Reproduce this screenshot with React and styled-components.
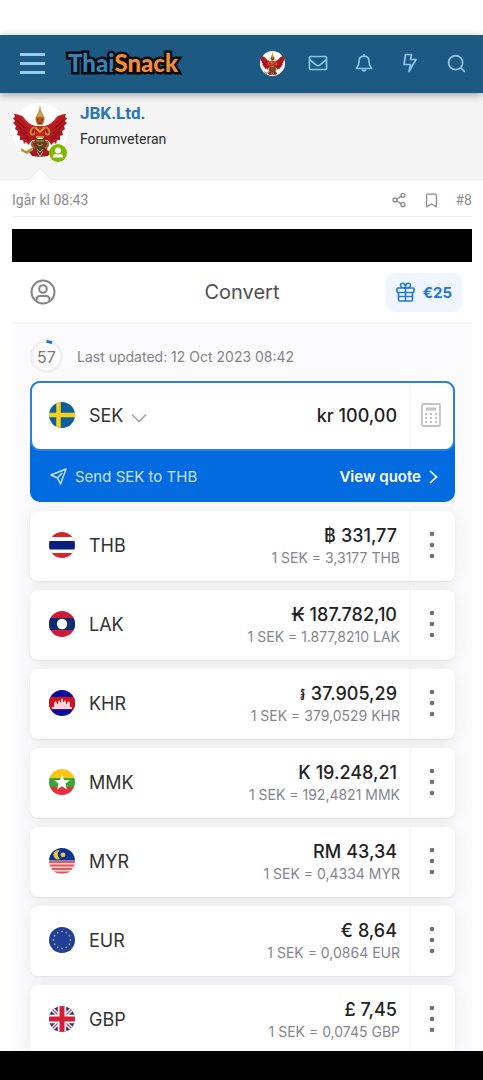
import { useState } from "react";
import styled, { createGlobalStyle } from "styled-components";
import { Bookmark, Search, Share2 } from "lucide-react";

const GlobalStyle = createGlobalStyle`
  * {
    box-sizing: border-box;
  }
  body {
    margin: 0;
    background: #fff;
    font-family: Roboto, "Liberation Sans", sans-serif;
  }
  button, input, select {
    margin: 0;
    padding: 0;
    border: none;
    background: none;
    font: inherit;
    color: inherit;
  }
  button {
    cursor: pointer;
  }
  svg {
    display: block;
  }
`;

const Page = styled.div`
  display: flex;
  flex-direction: column;
  height: 100vh;
`;

const StatusBar = styled.div`
  flex: none;
  height: 35px;
`;

const SystemBar = styled.div`
  flex: none;
  height: 29px;
  background: #000;
`;

const Header = styled.header`
  position: relative;
  z-index: 1;
  flex: none;
  display: flex;
  align-items: center;
  height: 58px;
  padding: 0 4px 2px 20px;
  background: #1c5a84;
  color: #8fc3ef;
  box-shadow: 0 2px 8px rgba(0, 0, 0, 0.35);
`;

const MenuButton = styled.button`
  display: flex;
  flex-direction: column;
  gap: 6px;
  width: 25px;
  margin-right: 23px;
`;

const MenuLine = styled.span`
  height: 3px;
  background: #9dccf2;
`;

const Logo = styled.a`
  flex: 1;
  font-family: Lato, sans-serif;
  font-size: 24px;
  font-weight: 900;
  line-height: 28px;
  text-decoration: none;
  -webkit-text-stroke: 5px #0a0c10;
  paint-order: stroke fill;
`;

const LogoPart = styled.span`
  color: ${(props) => (props.$accent ? "#f58d32" : "#3584b8")};
`;

const NavButton = styled.button`
  display: flex;
  align-items: center;
  justify-content: center;
  width: 46px;
  height: 56px;
`;

const Main = styled.main`
  flex: 1;
  min-height: 0;
  overflow: hidden;
`;

const UserPanel = styled.section`
  position: relative;
  display: flex;
  gap: 12px;
  height: 87px;
  padding: 10px 12px;
  background: #f5f5f5;
  border-bottom: 1px solid #ececec;
  &::after {
    content: "";
    position: absolute;
    left: 29px;
    bottom: -1px;
    border: 11px solid transparent;
    border-top: none;
    border-bottom-color: #fff;
    filter: drop-shadow(0 -1px 0 #e2e2e2);
  }
`;

const AvatarBox = styled.div`
  position: relative;
  width: 56px;
  height: 56px;
`;

const OnlineBadge = styled.span`
  position: absolute;
  right: 1px;
  bottom: -3px;
`;

const UserName = styled.a`
  display: block;
  margin-bottom: 6px;
  color: #2977b5;
  font-size: 17px;
  font-weight: 700;
  line-height: 20px;
  text-decoration: none;
`;

const UserTitle = styled.div`
  color: #2b2b2b;
  font-size: 14px;
  line-height: 20px;
`;

const PostMeta = styled.div`
  display: flex;
  align-items: center;
  gap: 16px;
  height: 37px;
  margin: 0 11px 12px 12px;
  padding-top: 4px;
  border-bottom: 1px solid #efefef;
  color: #8c8c8c;
  font-size: 14px;
`;

const PostDate = styled.time`
  flex: 1;
`;

const PostNumber = styled.a`
  color: inherit;
  text-decoration: none;
`;

const Converter = styled.article`
  margin: 0 11px 0 12px;
  background: #fbfbfd;
  font-family: Inter, "Noto Sans", sans-serif;
`;

const BlackStrip = styled.div`
  height: 33px;
  background: #000;
`;

const ConverterHeader = styled.div`
  display: grid;
  grid-template-columns: 1fr auto 1fr;
  align-items: center;
  height: 62px;
  padding: 0 10px;
  background: #fff;
  border-bottom: 2px solid #f5f5f7;
`;

const ProfileButton = styled.button`
  justify-self: start;
  padding-left: 8px;
`;

const Title = styled.h1`
  margin: 0;
  color: #505050;
  font-size: 20px;
  font-weight: 400;
  line-height: 24px;
`;

const GiftButton = styled.button`
  justify-self: end;
  display: flex;
  align-items: center;
  gap: 8px;
  height: 39px;
  padding: 0 10px;
  border-radius: 9px;
  background: #eff6ff;
  color: #2378d9;
  font-size: 15px;
  font-weight: 700;
`;

const UpdatedRow = styled.div`
  display: flex;
  align-items: center;
  gap: 14px;
  height: 57px;
  padding: 8px 18px 0;
  color: #83838f;
  font-size: 14px;
`;

const Countdown = styled.div`
  display: grid;
  width: 33px;
  height: 33px;
  color: #777;
  font-size: 16px;
  & > * {
    grid-area: 1 / 1;
    place-self: center;
  }
`;

const CardList = styled.div`
  display: flex;
  flex-direction: column;
  gap: 9px;
  padding: 0 17px 20px 18px;
`;

const ActiveCard = styled.section`
  border-radius: 10px;
  background: #036be0;
`;

const Card = styled.section`
  display: flex;
  align-items: center;
  height: 70px;
  padding-bottom: 2px;
  padding-left: ${(props) => (props.$active ? "17px" : "19px")};
  border: ${(props) => (props.$active ? "2px solid #2b80e0" : "none")};
  border-radius: ${(props) => (props.$active ? "10px" : "8px")};
  background: #fff;
  box-shadow: ${(props) => (props.$active ? "none" : "0 1px 2px rgba(0, 0, 0, 0.06), 0 2px 16px rgba(0, 0, 0, 0.08)")};
`;

const Flag = styled.svg`
  flex: none;
  width: 26px;
  height: 26px;
  margin-right: 14px;
  border-radius: 50%;
`;

const Code = styled.div`
  flex: 1;
  color: #333;
  font-size: 18px;
`;

const CurrencyPicker = styled.label`
  position: relative;
  width: 58px;
  color: #333;
  font-size: 18px;
  & > svg {
    position: absolute;
    right: 0;
    top: 8px;
    pointer-events: none;
  }
`;

const CurrencySelect = styled.select`
  display: block;
  width: 100%;
  appearance: none;
  outline: none;
`;

const AmountInput = styled.input`
  flex: 1;
  min-width: 0;
  padding-right: 12px;
  color: #222;
  font-size: 18px;
  font-weight: 500;
  text-align: right;
  outline: none;
`;

const Values = styled.div`
  padding: 1px 9px 0 0;
  text-align: right;
`;

const Amount = styled.div`
  display: flex;
  align-items: center;
  justify-content: flex-end;
  gap: 5px;
  padding-right: 3px;
  color: #222;
  font-size: 18px;
  font-weight: 500;
  line-height: 24px;
`;

const Rate = styled.div`
  color: #85858f;
  font-size: 14px;
  line-height: 20px;
`;

const CardAction = styled.button`
  display: flex;
  align-items: center;
  justify-content: center;
  align-self: stretch;
  width: ${(props) => (props.$active ? "44px" : "46px")};
  padding-right: 2px;
  border-left: 2px solid #f8f8fa;
`;

const QuoteBar = styled.div`
  display: flex;
  align-items: center;
  justify-content: space-between;
  height: 51px;
  padding: 0 17px 0 20px;
  color: #c9e2fc;
  font-size: 15px;
`;

const SendLabel = styled.span`
  display: flex;
  align-items: center;
  gap: 8px;
`;

const QuoteButton = styled.button`
  display: flex;
  align-items: center;
  gap: 8px;
  color: #fff;
  font-weight: 600;
`;

const Garuda = ({ size }) => (
  <svg width={size} height={size} viewBox="0 0 56 56" aria-hidden="true">
    <circle cx="28" cy="28" r="28" fill="#fff" />
    {["", "translate(56 0) scale(-1 1)"].map((side) => (
      <g key={side} transform={side}>
        <path d="M2 11C8 11 12 14 14 18C17 22 20 23 25 23L25 37C21 36 18 38 17 42L14 39L12 41L11 37L8 37L8 33L5 32L6 28L3 26L4 23L1 20L3 18L1 15L3 14Z" fill="#b3191f" />
        <path d="M4 17L14 26M6 23L15 31M8 29L16 34M11 35L17 36" stroke="#7c1014" strokeWidth="1" fill="none" />
        <path d="M9 13C12 17 15 22 23 24" stroke="#c9262b" strokeWidth="2" fill="none" />
        <path d="M23 24C19 25 18 28 19 31C21 33 23 30 24 28" stroke="#b98a32" strokeWidth="2" fill="none" />
        <path d="M20 38L27 38L25 49L28 54L20 53L17 49L21 47Z" fill="#a91b20" />
        <path d="M22 38C18 41 20 45 25 45" stroke="#8a6d2a" strokeWidth="2" fill="none" />
      </g>
    ))}
    <path d="M28 1L29 7L31 11L33 16L31 22H25L23 16L25 11L27 7Z" fill="#c5a04d" />
    <path d="M24 14H32L31 20L28 22L25 20Z" fill="#b5562d" />
    <path d="M25 17H27M29 17H31M26 20H30" stroke="#5b2713" strokeWidth="1" />
    <path d="M22 23H34L34 28L31 35H25L22 28Z" fill="#c1282a" />
    <path d="M23 24L28 29L33 24M24 34H32" stroke="#c99a42" strokeWidth="2" fill="none" />
    <path d="M22 36H34L32 41L33 45L28 53L23 45L24 41Z" fill="#57431f" />
    <path d="M24 38H32M25 41L28 43L31 41M25 46L28 49L31 46" stroke="#c79c42" strokeWidth="1" fill="none" />
    <path d="M9 45L14 48L21 44L21 46L15 51L9 48Z" fill="#b4973c" />
  </svg>
);

const FLAGS = {
  SEK: (
    <>
      <path d="M0 0H26V26H0Z" fill="#0f5f9c" />
      <path d="M9.500 0V26M0 13H26" stroke="#fbd116" strokeWidth="4.500" />
    </>
  ),
  THB: (
    <>
      <path d="M0 0H26V26H0Z" fill="#d3242f" />
      <path d="M0 5H26V21H0Z" fill="#fff" />
      <path d="M0 9H26V17.500H0Z" fill="#0b1f80" />
    </>
  ),
  LAK: (
    <>
      <path d="M0 0H26V26H0Z" fill="#cf1b38" />
      <path d="M0 7H26V19H0Z" fill="#0b2c72" />
      <circle cx="13" cy="13" r="5.200" fill="#fff" />
    </>
  ),
  KHR: (
    <>
      <path d="M0 0H26V26H0Z" fill="#0a0a9c" />
      <path d="M0 7H26V19.500H0Z" fill="#d50f1c" />
      <path d="M3 19V17H5V13L6.500 11L8 13V14H9V12L10 10L11 12H12V10L13 8.500L14 10V12H15L16 10L17 12V14H18V13L19.500 11L21 13V17H23V19Z" fill="#f7d5d9" />
    </>
  ),
  MMK: (
    <>
      <path d="M0 0H26V9H0Z" fill="#fcc612" />
      <path d="M0 9H26V18H0Z" fill="#3aa636" />
      <path d="M0 18H26V26H0Z" fill="#e72d3f" />
      <path d="M13 5.500L15 11L21 11.200L16.300 14.800L18 20.500L13 17.200L8 20.500L9.700 14.800L5 11.200L11 11Z" fill="#fff" />
    </>
  ),
  MYR: (
    <>
      <path d="M0 0H26V26H0Z" fill="#fbdcdc" />
      <path d="M0 14H26M0 17.500H26M0 21H26M0 24.500H26" stroke="#e8555a" strokeWidth="1.800" />
      <path d="M0 0H26V12.500H0Z" fill="#0c3396" />
      <path d="M10.500 2.500A4.600 4.600 0 1 0 11 11A5.400 5.400 0 0 1 10.500 2.500Z" fill="#e5cb3b" />
      <circle cx="14" cy="6.800" r="2.400" fill="#e5cb3b" />
    </>
  ),
  EUR: (
    <>
      <path d="M0 0H26V26H0Z" fill="#1f3f98" />
      {Array.from({ length: 12 }, (_, i) => (
        <circle key={i} cx={13 + 8.5 * Math.cos((i * Math.PI) / 6)} cy={13 + 8.5 * Math.sin((i * Math.PI) / 6)} r="0.900" fill="#a9a86c" />
      ))}
    </>
  ),
  GBP: (
    <>
      <path d="M0 0H26V26H0Z" fill="#25347c" />
      <path d="M0 0L26 26M26 0L0 26" stroke="#fff" strokeWidth="4" />
      <path d="M0 0L26 26M26 0L0 26" stroke="#d5384b" strokeWidth="1.300" />
      <path d="M13 0V26M0 13H26" stroke="#fff" strokeWidth="8.500" />
      <path d="M13 0V26M0 13H26" stroke="#d51f35" strokeWidth="5" />
    </>
  ),
};

const CurrencyFlag = ({ code }) => (
  <Flag viewBox="0 0 26 26" aria-hidden="true">
    {FLAGS[code]}
  </Flag>
);

const rates = [
  { code: "THB", symbol: "฿", amount: "331,77", rate: "3,3177" },
  { code: "LAK", symbol: "₭", amount: "187.782,10", rate: "1.877,8210" },
  { code: "KHR", symbol: "៛", amount: "37.905,29", rate: "379,0529" },
  { code: "MMK", symbol: "K", amount: "19.248,21", rate: "192,4821" },
  { code: "MYR", symbol: "RM", amount: "43,34", rate: "0,4334" },
  { code: "EUR", symbol: "€", amount: "8,64", rate: "0,0864" },
  { code: "GBP", symbol: "£", amount: "7,45", rate: "0,0745" },
];

const App = () => {
  const [currency, setCurrency] = useState("SEK");
  const [amount, setAmount] = useState("kr 100,00");

  return (
    <>
      <GlobalStyle />
      <Page>
        <StatusBar />
        <Header>
          <MenuButton aria-label="Meny">
            <MenuLine />
            <MenuLine />
            <MenuLine />
          </MenuButton>
          <Logo href="#">
            <LogoPart>Thai</LogoPart>
            <LogoPart $accent>Snack</LogoPart>
          </Logo>
          <NavButton aria-label="Konto">
            <Garuda size={25} />
          </NavButton>
          <NavButton aria-label="Konversationer">
            <svg width="20" height="16" viewBox="0 0 20 16" fill="none" stroke="currentColor" strokeWidth="1.700">
              <rect x="1.500" y="1.500" width="17" height="13" rx="1" />
              <path d="M1.500 4.500L8 9.800C9.300 10.800 10.700 10.800 12 9.800L18.500 4.500" />
            </svg>
          </NavButton>
          <NavButton aria-label="Aviseringar">
            <svg width="18" height="20" viewBox="0 0 18 20" fill="none" stroke="currentColor" strokeWidth="1.700" strokeLinejoin="round">
              <path d="M9 1V3M2 15.500H16C16.500 15.500 16.600 15 16.200 14.600C15 13.300 14 12.300 14 8.500C14 5.300 12 3.200 9 3.200S4 5.300 4 8.500C4 12.300 3 13.300 1.800 14.600C1.400 15 1.500 15.500 2 15.500Z" />
              <path d="M6.500 16.500H11.500C11.500 19.500 6.500 19.500 6.500 16.500Z" fill="currentColor" stroke="none" />
            </svg>
          </NavButton>
          <NavButton aria-label="Nytt">
            <svg width="16" height="20" viewBox="0 0 16 20" fill="none" stroke="currentColor" strokeWidth="1.700" strokeLinejoin="round">
              <path d="M3.500 1.500H9.500L8.500 6.500H14L7 18.500L8.500 11.500H2Z" />
            </svg>
          </NavButton>
          <NavButton aria-label="Sök">
            <Search size={21} strokeWidth={1.9} />
          </NavButton>
        </Header>

        <Main>
          <UserPanel>
            <AvatarBox>
              <Garuda size={56} />
              <OnlineBadge>
                <svg width="18" height="18" viewBox="0 0 18 18">
                  <circle cx="9" cy="9" r="9" fill="#7fb900" />
                  <circle cx="9" cy="6.500" r="2.900" fill="#fff" />
                  <path d="M3.800 13.500C3.800 9.500 7 9.500 9 10.500C11 9.500 14.200 9.500 14.200 13.500Z" fill="#fff" />
                </svg>
              </OnlineBadge>
            </AvatarBox>
            <div>
              <UserName href="#">JBK.Ltd.</UserName>
              <UserTitle>Forumveteran</UserTitle>
            </div>
          </UserPanel>

          <PostMeta>
            <PostDate>Igår kl 08:43</PostDate>
            <button aria-label="Dela">
              <Share2 size={16} strokeWidth={2} />
            </button>
            <button aria-label="Bokmärk">
              <Bookmark size={17} strokeWidth={1.8} />
            </button>
            <PostNumber href="#">#8</PostNumber>
          </PostMeta>

          <Converter>
            <BlackStrip />
            <ConverterHeader>
              <ProfileButton aria-label="Profile">
                <svg width="26" height="26" viewBox="0 0 26 26" fill="none" stroke="#858585" strokeWidth="2">
                  <circle cx="13" cy="13" r="11.500" />
                  <circle cx="13" cy="10" r="3.800" />
                  <path d="M6.500 22V20.500C6.500 18 8 17 10 17H16C18 17 19.500 18 19.500 20.500V22" />
                </svg>
              </ProfileButton>
              <Title>Convert</Title>
              <GiftButton>
                <svg width="19" height="20" viewBox="0 0 19 20" fill="none" stroke="currentColor" strokeWidth="1.600" strokeLinejoin="round">
                  <rect x="1" y="6" width="17" height="4.500" rx="1" />
                  <path d="M2.500 10.500V17.500C2.500 18.500 3 19 4 19H15C16 19 16.500 18.500 16.500 17.500V10.500M9.500 6V19M2.500 14.500H16.500" />
                  <path d="M9.500 6C5.500 6 4.500 4.500 4.500 3.200C4.500 0.500 9.500 0 9.500 6C9.500 0 14.500 0.500 14.500 3.200C14.500 4.500 13.500 6 9.500 6Z" />
                </svg>
                €25
              </GiftButton>
            </ConverterHeader>

            <UpdatedRow>
              <Countdown>
                <svg width="33" height="33" viewBox="0 0 33 33" fill="none">
                  <circle cx="16.500" cy="16.500" r="15" fill="#fff" stroke="#f0f0f2" strokeWidth="3" />
                  <path d="M16.500 1.500A15 15 0 0 1 22 2.800" stroke="#1b74dc" strokeWidth="3" />
                </svg>
                <span>57</span>
              </Countdown>
              <span>Last updated: 12 Oct 2023 08:42</span>
            </UpdatedRow>

            <CardList>
              <ActiveCard>
                <Card $active>
                  <CurrencyFlag code={currency} />
                  <CurrencyPicker>
                    <CurrencySelect aria-label="Currency" value={currency} onChange={(e) => setCurrency(e.target.value)}>
                      <option>SEK</option>
                      {rates.map((item) => (
                        <option key={item.code}>{item.code}</option>
                      ))}
                    </CurrencySelect>
                    <svg width="16" height="10" viewBox="0 0 16 10" fill="none" stroke="#a5a5a5" strokeWidth="1.600">
                      <path d="M1 1.500L8 8.500L15 1.500" />
                    </svg>
                  </CurrencyPicker>
                  <AmountInput aria-label="Amount" value={amount} onChange={(e) => setAmount(e.target.value)} />
                  <CardAction $active aria-label="Calculator">
                    <svg width="20" height="24" viewBox="0 0 20 24" fill="none" stroke="#c2c2c6" strokeWidth="1.800">
                      <rect x="1" y="1" width="18" height="22" rx="1.500" />
                      <path d="M5 6H15" strokeWidth="3" />
                      <path d="M4 11H16M4 15H16M4 19H16" strokeWidth="2" strokeDasharray="2 3" />
                    </svg>
                  </CardAction>
                </Card>
                <QuoteBar>
                  <SendLabel>
                    <svg width="17" height="17" viewBox="0 0 17 17" fill="none" stroke="currentColor" strokeWidth="1.500" strokeLinejoin="round">
                      <path d="M1 7L16 1L10.500 16L7.500 10Z" />
                      <path d="M7.500 10L12 5" />
                    </svg>
                    Send SEK to THB
                  </SendLabel>
                  <QuoteButton>
                    View quote
                    <svg width="9" height="14" viewBox="0 0 9 14" fill="none" stroke="currentColor" strokeWidth="1.700">
                      <path d="M1 1L7.500 7L1 13" />
                    </svg>
                  </QuoteButton>
                </QuoteBar>
              </ActiveCard>

              {rates.map((item) => (
                <Card key={item.code}>
                  <CurrencyFlag code={item.code} />
                  <Code>{item.code}</Code>
                  <Values>
                    <Amount>
                      <span>{item.symbol}</span>
                      <span>{item.amount}</span>
                    </Amount>
                    <Rate>
                      1 SEK = {item.rate} {item.code}
                    </Rate>
                  </Values>
                  <CardAction aria-label={`${item.code} options`}>
                    <svg width="6" height="28" viewBox="0 0 6 28" fill="#6f6f73">
                      <circle cx="3" cy="3" r="2.300" />
                      <circle cx="3" cy="14" r="2.300" />
                      <circle cx="3" cy="25" r="2.300" />
                    </svg>
                  </CardAction>
                </Card>
              ))}
            </CardList>
          </Converter>
        </Main>
        <SystemBar />
      </Page>
    </>
  );
};

export default App;
